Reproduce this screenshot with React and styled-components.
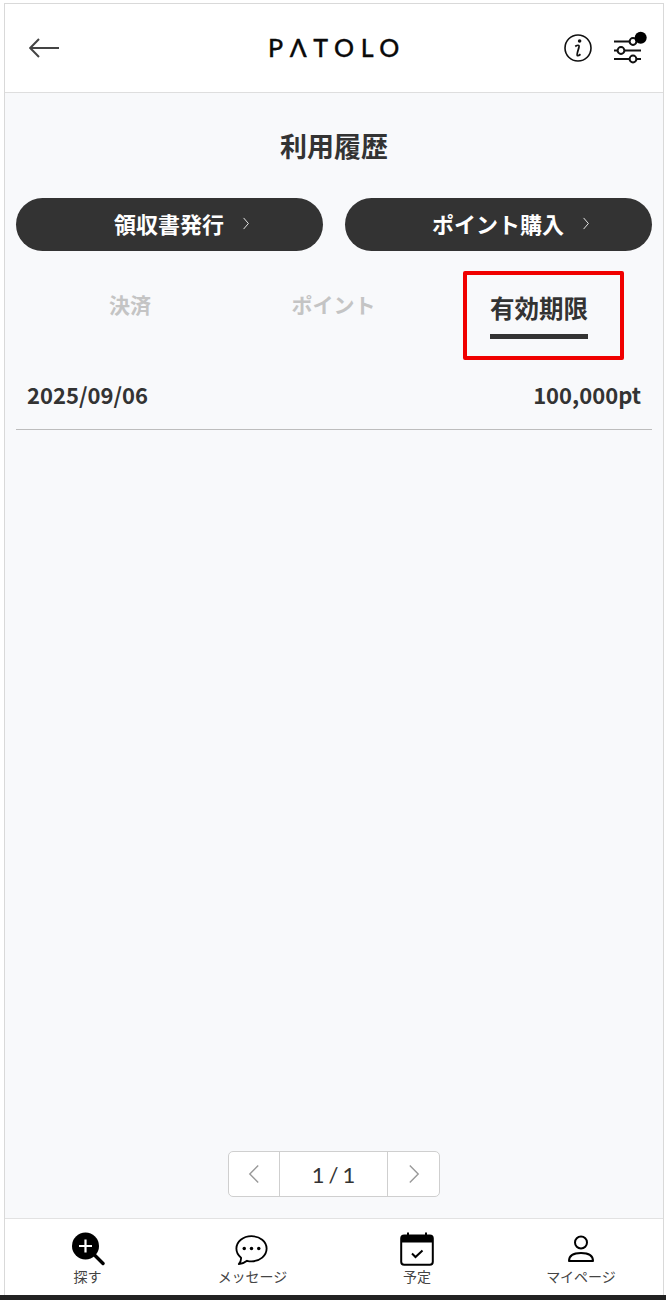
import React from 'react';
import styled, { createGlobalStyle } from 'styled-components';

const Global = createGlobalStyle`
  html, body { margin: 0; padding: 0; background: #fff; }
  body { font-family: "Noto Sans CJK JP", "Noto Sans", sans-serif; color: #333; }
`;

const Viewport = styled.div`
  width: 666px;
  height: 1300px;
  display: flex;
  flex-direction: column;
  overflow: hidden;
  background: #fff;
`;

const Phone = styled.div`
  flex: 1;
  min-height: 0;
  margin: 3px 2px 0 4px;
  border: 1px solid #d9d9d9;
  border-bottom: 0;
  display: flex;
  flex-direction: column;
  background: #f8f9fb;
`;

const Header = styled.header`
  height: 89px;
  flex: none;
  box-sizing: border-box;
  background: #fff;
  border-bottom: 1px solid #dedede;
  display: flex;
  align-items: center;
  justify-content: space-between;
  padding: 0 22px 0 24px;
  position: relative;
`;

const Logo = styled.div`
  position: absolute;
  left: 263px;
  top: 25px;
  font-family: "Lato", sans-serif;
  font-size: 25px;
  line-height: 36px;
  font-weight: 500;
  letter-spacing: 6.6px;
  color: #0a0a0a;
  -webkit-text-stroke: 0.3px #0a0a0a;
`;

const HeaderIcons = styled.div`
  display: flex;
  align-items: center;
  gap: 22px;
`;

const Main = styled.main`
  flex: 1;
  min-height: 0;
  display: flex;
  flex-direction: column;
  padding: 0 11px;
`;

const Title = styled.h1`
  margin: 33px 0 0;
  font-size: 27px;
  line-height: 40px;
  font-weight: 700;
  text-align: center;
  color: #333;
`;

const ActionRow = styled.div`
  display: grid;
  grid-template-columns: 307px 307px;
  justify-content: space-between;
  margin-top: 32px;
`;

const ActionButton = styled.button`
  height: 53px;
  border: 0;
  border-radius: 27px;
  background: #333;
  color: #fff;
  font-family: inherit;
  font-size: 22px;
  font-weight: 700;
  display: flex;
  align-items: center;
  justify-content: center;
  gap: 18px;
  padding: 0 0 3px 25px;
`;

const Tabs = styled.div`
  display: grid;
  grid-template-columns: 228px 179px 232px;
  margin-top: 20px;
  height: 108px;
  position: relative;
`;

const Tab = styled.div`
  display: flex;
  flex-direction: column;
  align-items: center;
  padding-top: ${p => (p.$active ? '19px' : '17px')};
  font-size: ${p => (p.$active ? '24.5px' : '21px')};
  line-height: ${p => (p.$active ? '36px' : '32px')};
  font-weight: 700;
  color: ${p => (p.$active ? '#333' : '#c4c4c4')};
`;

const TabLabel = styled.span`
  display: inline-block;
  border-bottom: ${p => (p.$active ? '5px solid #333' : '0')};
  padding-bottom: ${p => (p.$active ? '8px' : '0')};
`;

const Highlight = styled.div`
  position: absolute;
  left: 447px;
  top: 0;
  width: 161px;
  height: 89px;
  box-sizing: border-box;
  border: 4px solid #f00000;
  border-radius: 2px;
`;

const Row = styled.div`
  margin-top: -10px;
  height: 61px;
  box-sizing: border-box;
  border-bottom: 1px solid #bdbdbd;
  display: flex;
  align-items: flex-start;
  justify-content: space-between;
  padding: 8px 11px 0 11px;
  font-size: 22px;
  line-height: 34px;
  font-weight: 700;
  color: #333;
`;

const Spacer = styled.div`
  flex: 1;
`;

const Pager = styled.div`
  align-self: center;
  display: grid;
  grid-template-columns: 51px 108px 51px;
  height: 46px;
  box-sizing: border-box;
  margin: 0 0 21px;
  border: 1px solid #cfcfcf;
  border-radius: 5px;
  background: #fff;
`;

const PagerCell = styled.div`
  display: flex;
  align-items: center;
  justify-content: center;
  font-family: "Lato", sans-serif;
  font-size: 22px;
  word-spacing: -1.500px;
  color: #333;
  border-right: ${p => (p.$divider ? '1px solid #cfcfcf' : '0')};
`;

const BottomNav = styled.nav`
  flex: none;
  height: 77px;
  box-sizing: border-box;
  background: #fff;
  border-top: 1px solid #e2e2e2;
  display: grid;
  grid-template-columns: 165px 165px 164px 1fr;
`;

const NavItem = styled.div`
  display: flex;
  flex-direction: column;
  align-items: center;
  padding-top: 13px;
  color: #444;
`;

const NavIcon = styled.div`
  height: 36px;
  display: flex;
  align-items: flex-start;
  justify-content: center;
`;

const NavLabel = styled.span`
  font-size: 14px;
  line-height: 20px;
  margin-top: -2px;
`;

const BlackBar = styled.div`
  height: 5px;
  flex: none;
  background: #222;
`;

const BackIcon = () => (
  <svg width="30" height="20" viewBox="0 0 30 20" fill="none" stroke="#444" strokeWidth="2">
    <path d="M1 10H30M10 1L1.200 10L10 19" />
  </svg>
);

const InfoIcon = () => (
  <svg width="28" height="28" viewBox="0 0 28 28" fill="none">
    <circle cx="14" cy="14" r="13" stroke="#111" strokeWidth="1.6" />
    <circle cx="15.600" cy="7" r="1.800" fill="#111" />
    <path d="M11.200 12.400c1.200-.7 3.400-1.300 3.800-.7.400.5-.3 2.500-1 4.900-.7 2.400-1.200 4.500-.7 4.900.5.400 2-.3 3.200-1.300" stroke="#111" strokeWidth="1.800" />
  </svg>
);

const FilterSvg = styled.svg`
  overflow: visible;
`;

const FilterIcon = () => (
  <FilterSvg width="27" height="30" viewBox="0 0 27 30" fill="none" stroke="#111" strokeWidth="2">
    <path d="M0 8.500H15.500M0 17.500H3.500M10.500 17.500H27M0 26H15.500M22.500 26H27" />
    <circle cx="19" cy="8.500" r="3.400" />
    <circle cx="7" cy="17.500" r="3.400" />
    <circle cx="19" cy="26" r="3.400" />
    <circle cx="26.700" cy="4.700" r="6" fill="#000" stroke="none" />
  </FilterSvg>
);

const Chevron = ({ dir = 'right', color = '#fff', w = 8, h = 13, sw = 1 }) => (
  <svg width={w} height={h} viewBox="0 0 10 14" preserveAspectRatio="none" fill="none" stroke={color} strokeWidth={sw}>
    <path d={dir === 'right' ? 'M2 1L8 7L2 13' : 'M8 1L2 7L8 13'} />
  </svg>
);

const SearchIcon = () => (
  <svg width="34" height="34" viewBox="0 0 34 34" fill="none">
    <circle cx="14.500" cy="14" r="13.500" fill="#000" />
    <path d="M24 23.500L32 31.500" stroke="#000" strokeWidth="3.400" strokeLinecap="round" />
    <path d="M14.500 7.500V20.500M8 14H21" stroke="#fff" strokeWidth="2.200" />
  </svg>
);

const ChatIcon = () => (
  <svg width="33" height="31" viewBox="0 0 34 32" fill="none" style={{ marginTop: 3, marginLeft: -3 }}>
    <path d="M17 1.200C8.300 1.200 1.400 6.800 1.400 14c0 3.700 1.800 7 4.800 9.400.2 2-.9 5-2.300 6.600 3.200-.3 6.500-1.700 8.500-3.400 1.500.4 3 .6 4.600.6 8.700 0 15.600-5.800 15.600-13.200S25.700 1.200 17 1.200Z" stroke="#000" strokeWidth="1.900" strokeLinejoin="round" />
    <circle cx="9.500" cy="14" r="1.800" fill="#000" />
    <circle cx="17" cy="14" r="1.800" fill="#000" />
    <circle cx="24.500" cy="14" r="1.800" fill="#000" />
  </svg>
);

const CalendarIcon = () => (
  <svg width="34" height="34" viewBox="0 0 34 34" fill="none">
    <rect x="1.200" y="3.500" width="31.600" height="29.300" rx="3" stroke="#000" strokeWidth="2" />
    <path d="M1.500 6a3 3 0 0 1 3-3h25a3 3 0 0 1 3 3v4.500H1.500Z" fill="#000" />
    <path d="M8 0.500V4M26 0.500V4" stroke="#000" strokeWidth="2" />
    <path d="M12 21.500L15.500 25L22.500 18.500" stroke="#000" strokeWidth="2" />
  </svg>
);

const UserIcon = () => (
  <svg width="28" height="28" viewBox="0 0 28 28" fill="none" stroke="#000" strokeWidth="2" style={{ marginTop: 3 }}>
    <circle cx="14" cy="7.500" r="6" />
    <path d="M2 26c0-5 4-8 12-8s12 3 12 8Z" strokeLinejoin="round" />
  </svg>
);

export default function App() {
  return (
    <>
      <Global />
      <Viewport>
        <Phone>
          <Header>
            <BackIcon />
            <Logo>PΛTOLO</Logo>
            <HeaderIcons>
              <InfoIcon />
              <FilterIcon />
            </HeaderIcons>
          </Header>
          <Main>
            <Title>利用履歴</Title>
            <ActionRow>
              <ActionButton>領収書発行<Chevron /></ActionButton>
              <ActionButton>ポイント購入<Chevron /></ActionButton>
            </ActionRow>
            <Tabs>
              <Tab>決済</Tab>
              <Tab>ポイント</Tab>
              <Tab $active><TabLabel $active>有効期限</TabLabel></Tab>
              <Highlight />
            </Tabs>
            <Row>
              <span>2025/09/06</span>
              <span>100,000pt</span>
            </Row>
            <Spacer />
            <Pager>
              <PagerCell $divider><Chevron dir="left" color="#999" w={14} h={20} /></PagerCell>
              <PagerCell $divider>1 / 1</PagerCell>
              <PagerCell><Chevron color="#999" w={14} h={20} /></PagerCell>
            </Pager>
          </Main>
          <BottomNav>
            <NavItem><NavIcon><SearchIcon /></NavIcon><NavLabel>探す</NavLabel></NavItem>
            <NavItem><NavIcon><ChatIcon /></NavIcon><NavLabel>メッセージ</NavLabel></NavItem>
            <NavItem><NavIcon><CalendarIcon /></NavIcon><NavLabel>予定</NavLabel></NavItem>
            <NavItem><NavIcon><UserIcon /></NavIcon><NavLabel>マイページ</NavLabel></NavItem>
          </BottomNav>
        </Phone>
        <BlackBar />
      </Viewport>
    </>
  );
}
